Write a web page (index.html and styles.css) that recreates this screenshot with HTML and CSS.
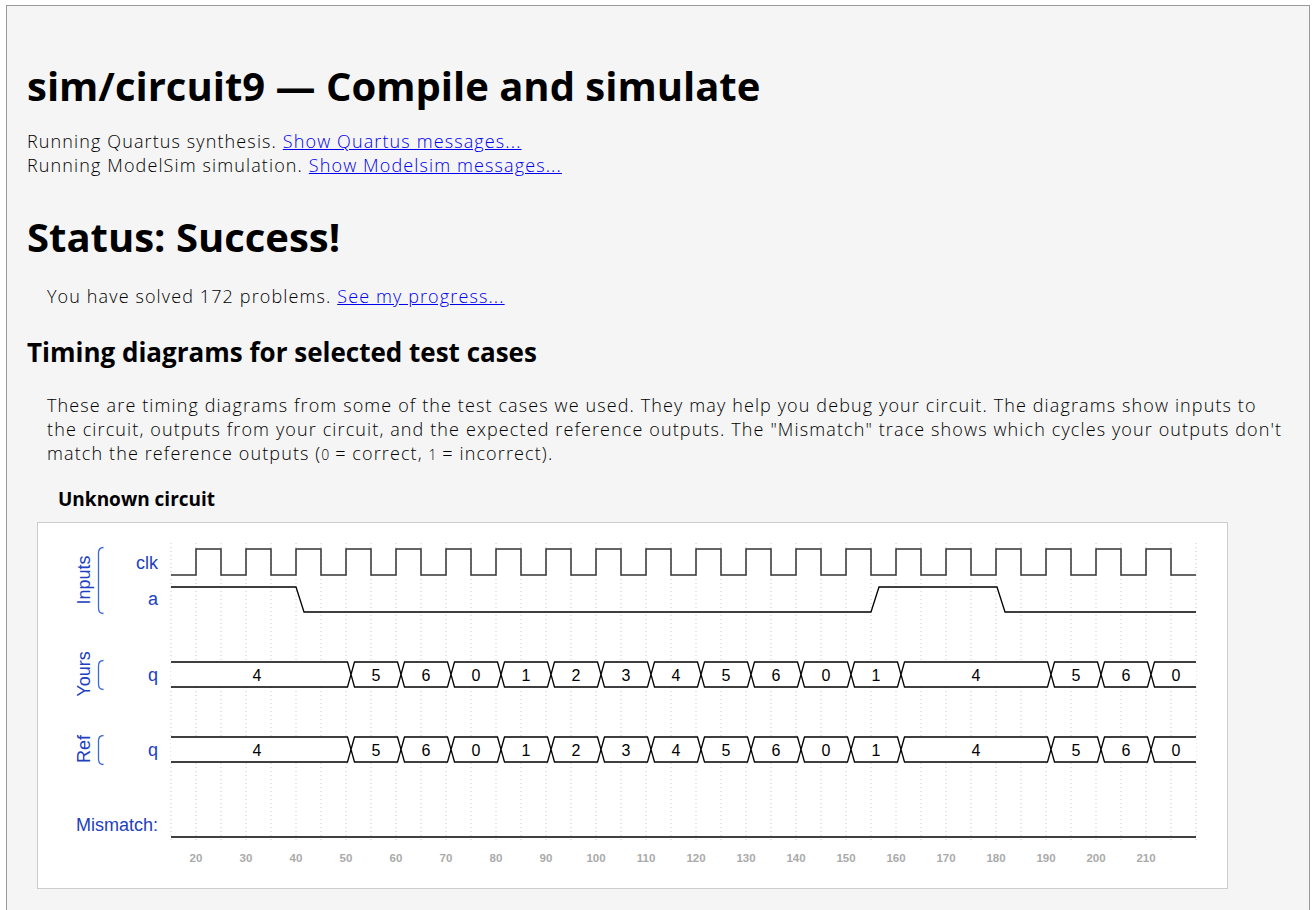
FILE: index.html
```html
<!DOCTYPE html>
<html lang="en">
<head>
<meta charset="utf-8">
<title>sim/circuit9 — Compile and simulate</title>
<link rel="stylesheet" href="styles.css">
</head>
<body>
<div class="page">
  <h1>sim/circuit9 — Compile and simulate</h1>
  <p class="log">Running Quartus synthesis. <a href="#">Show Quartus messages...</a><br>Running ModelSim simulation. <a href="#">Show Modelsim messages...</a></p>
  <h2>Status: Success!</h2>
  <p class="solved">You have solved 172 problems. <a href="#">See my progress...</a></p>
  <h3>Timing diagrams for selected test cases</h3>
  <div class="tests">
    <p class="desc">These are timing diagrams from some of the test cases we used. They may help you debug your circuit. The diagrams show inputs to the circuit, outputs from your circuit, and the expected reference outputs. The "Mismatch" trace shows which cycles your outputs don't match the reference outputs (<code>0</code> = correct, <code>1</code> = incorrect).</p>
    <h4>Unknown circuit</h4>
    <div class="wave">
      <svg class="wave-svg" width="1189" height="365" viewBox="38 523 1189 365" xmlns="http://www.w3.org/2000/svg">
        <path class="grid" d="M171 543V840M196 543V840M221 543V840M246 543V840M271 543V840M296 543V840M321 543V840M346 543V840M371 543V840M396 543V840M421 543V840M446 543V840M471 543V840M496 543V840M521 543V840M546 543V840M571 543V840M596 543V840M621 543V840M646 543V840M671 543V840M696 543V840M721 543V840M746 543V840M771 543V840M796 543V840M821 543V840M846 543V840M871 543V840M896 543V840M921 543V840M946 543V840M971 543V840M996 543V840M1021 543V840M1046 543V840M1071 543V840M1096 543V840M1121 543V840M1146 543V840M1171 543V840M1196 543V840"/>

        <g class="lbl">
          <text class="rot" transform="translate(90 580) rotate(-90)">Inputs</text>
          <text class="rot" transform="translate(90 674) rotate(-90)">Yours</text>
          <text class="rot" transform="translate(90 749) rotate(-90)">Ref</text>
          <text class="sig" x="158" y="569">clk</text>
          <text class="sig" x="158" y="605">a</text>
          <text class="sig" x="158" y="681">q</text>
          <text class="sig" x="158" y="756">q</text>
          <text class="sig" x="158" y="831">Mismatch:</text>
        </g>
        <path class="brace" d="M103.5 547.5Q98.5 547.5 98.5 553V608Q98.5 613.5 103.5 613.5"/>
        <path class="brace" d="M103.5 660.5Q98.5 660.5 98.5 666V684Q98.5 689.5 103.5 689.5"/>
        <path class="brace" d="M103.5 735.5Q98.5 735.5 98.5 741V759Q98.5 764.5 103.5 764.5"/>

        <path class="clk" d="M171 575H196V549H221V575H246V549H271V575H296V549H321V575H346V549H371V575H396V549H421V575H446V549H471V575H496V549H521V575H546V549H571V575H596V549H621V575H646V549H671V575H696V549H721V575H746V549H771V575H796V549H821V575H846V549H871V575H896V549H921V575H946V549H971V575H996V549H1021V575H1046V549H1071V575H1096V549H1121V575H1146V549H1171V575H1196"/>
        <path class="sigline" d="M171 587H296L304 612H871L879 587H997L1005 612H1196"/>

        <g class="bus">
          <path d="M171 662H347.5L351 674.5L347.5 687H171"/>
          <path d="M351 674.5L354.5 662H397.5L401 674.5L397.5 687H354.5Z"/>
          <path d="M401 674.5L404.5 662H447.5L451 674.5L447.5 687H404.5Z"/>
          <path d="M451 674.5L454.5 662H497.5L501 674.5L497.5 687H454.5Z"/>
          <path d="M501 674.5L504.5 662H547.5L551 674.5L547.5 687H504.5Z"/>
          <path d="M551 674.5L554.5 662H597.5L601 674.5L597.5 687H554.5Z"/>
          <path d="M601 674.5L604.5 662H647.5L651 674.5L647.5 687H604.5Z"/>
          <path d="M651 674.5L654.5 662H697.5L701 674.5L697.5 687H654.5Z"/>
          <path d="M701 674.5L704.5 662H747.5L751 674.5L747.5 687H704.5Z"/>
          <path d="M751 674.5L754.5 662H797.5L801 674.5L797.5 687H754.5Z"/>
          <path d="M801 674.5L804.5 662H847.5L851 674.5L847.5 687H804.5Z"/>
          <path d="M851 674.5L854.5 662H897.5L901 674.5L897.5 687H854.5Z"/>
          <path d="M901 674.5L904.5 662H1047.5L1051 674.5L1047.5 687H904.5Z"/>
          <path d="M1051 674.5L1054.5 662H1097.5L1101 674.5L1097.5 687H1054.5Z"/>
          <path d="M1101 674.5L1104.5 662H1147.5L1151 674.5L1147.5 687H1104.5Z"/>
          <path d="M1196 662H1154.5L1151 674.5L1154.5 687H1196"/>
        </g>
        <g class="val">
          <text x="257" y="681">4</text><text x="376" y="681">5</text><text x="426" y="681">6</text><text x="476" y="681">0</text><text x="526" y="681">1</text><text x="576" y="681">2</text><text x="626" y="681">3</text><text x="676" y="681">4</text><text x="726" y="681">5</text><text x="776" y="681">6</text><text x="826" y="681">0</text><text x="876" y="681">1</text><text x="976" y="681">4</text><text x="1076" y="681">5</text><text x="1126" y="681">6</text><text x="1176" y="681">0</text>
        </g>

        <g class="bus">
          <path d="M171 737H347.5L351 749.5L347.5 762H171"/>
          <path d="M351 749.5L354.5 737H397.5L401 749.5L397.5 762H354.5Z"/>
          <path d="M401 749.5L404.5 737H447.5L451 749.5L447.5 762H404.5Z"/>
          <path d="M451 749.5L454.5 737H497.5L501 749.5L497.5 762H454.5Z"/>
          <path d="M501 749.5L504.5 737H547.5L551 749.5L547.5 762H504.5Z"/>
          <path d="M551 749.5L554.5 737H597.5L601 749.5L597.5 762H554.5Z"/>
          <path d="M601 749.5L604.5 737H647.5L651 749.5L647.5 762H604.5Z"/>
          <path d="M651 749.5L654.5 737H697.5L701 749.5L697.5 762H654.5Z"/>
          <path d="M701 749.5L704.5 737H747.5L751 749.5L747.5 762H704.5Z"/>
          <path d="M751 749.5L754.5 737H797.5L801 749.5L797.5 762H754.5Z"/>
          <path d="M801 749.5L804.5 737H847.5L851 749.5L847.5 762H804.5Z"/>
          <path d="M851 749.5L854.5 737H897.5L901 749.5L897.5 762H854.5Z"/>
          <path d="M901 749.5L904.5 737H1047.5L1051 749.5L1047.5 762H904.5Z"/>
          <path d="M1051 749.5L1054.5 737H1097.5L1101 749.5L1097.5 762H1054.5Z"/>
          <path d="M1101 749.5L1104.5 737H1147.5L1151 749.5L1147.5 762H1104.5Z"/>
          <path d="M1196 737H1154.5L1151 749.5L1154.5 762H1196"/>
        </g>
        <g class="val">
          <text x="257" y="756">4</text><text x="376" y="756">5</text><text x="426" y="756">6</text><text x="476" y="756">0</text><text x="526" y="756">1</text><text x="576" y="756">2</text><text x="626" y="756">3</text><text x="676" y="756">4</text><text x="726" y="756">5</text><text x="776" y="756">6</text><text x="826" y="756">0</text><text x="876" y="756">1</text><text x="976" y="756">4</text><text x="1076" y="756">5</text><text x="1126" y="756">6</text><text x="1176" y="756">0</text>
        </g>

        <path class="sigline" d="M171 837H1196"/>

        <g class="time">
          <text x="196" y="862">20</text><text x="246" y="862">30</text><text x="296" y="862">40</text><text x="346" y="862">50</text><text x="396" y="862">60</text><text x="446" y="862">70</text><text x="496" y="862">80</text><text x="546" y="862">90</text><text x="596" y="862">100</text><text x="646" y="862">110</text><text x="696" y="862">120</text><text x="746" y="862">130</text><text x="796" y="862">140</text><text x="846" y="862">150</text><text x="896" y="862">160</text><text x="946" y="862">170</text><text x="996" y="862">180</text><text x="1046" y="862">190</text><text x="1096" y="862">200</text><text x="1146" y="862">210</text>
        </g>
      </svg>
    </div>
  </div>
</div>
</body>
</html>
```
FILE: styles.css
```css
html, body {
  margin: 0;
  background: #ffffff;
}

.page {
  margin: 5px 6px 0;
  border: 1px solid #999999;
  border-bottom: none;
  background: #f5f5f5;
  padding: 56px 20px 40px;
  font-family: "Open Sans", "Liberation Sans", sans-serif;
  font-weight: 300;
  font-size: 18px;
  line-height: 24px;
  letter-spacing: 1.12px;
  color: #000000;
}

.page a {
  color: #0000ee;
  text-decoration: underline;
}

h1, h2, h3, h4 {
  font-family: "Open Sans", "Liberation Sans", sans-serif;
  font-weight: 700;
  letter-spacing: 0;
  color: #000000;
}

h1 {
  font-size: 40px;
  line-height: 48px;
  margin: 0 0 19px;
}

.log {
  margin: 0 0 36px;
}

h2 {
  font-size: 40px;
  line-height: 48px;
  margin: 0 0 23px;
}

.solved {
  margin: 0 0 29px 20px;
}

h3 {
  font-size: 26px;
  line-height: 31px;
  margin: 0 0 25px;
}

.tests {
  margin-left: 10px;
}

.desc {
  margin: 0 0 23px 10px;
}

.desc code {
  font-family: "Open Sans", sans-serif;
  font-size: 14px;
  line-height: 18px;
  letter-spacing: 0;
}

h4 {
  font-size: 19px;
  line-height: 23px;
  margin: 0 0 11px 21px;
}

.wave {
  width: 1189px;
  height: 365px;
  border: 1px solid #cccccc;
  background: #ffffff;
}

.wave-svg {
  display: block;
}

.grid {
  fill: none;
  stroke: #c8c8c8;
  stroke-width: 1;
  stroke-dasharray: 1 3;
}

.lbl text {
  font-family: "Liberation Sans", Arial, sans-serif;
  font-size: 18px;
  letter-spacing: 0;
  fill: #2040c0;
}

.lbl .rot {
  text-anchor: middle;
}

.lbl .sig {
  text-anchor: end;
}

.brace {
  fill: none;
  stroke: #3a6ad6;
  stroke-width: 1.3;
}

.clk {
  fill: none;
  stroke: #333333;
  stroke-width: 1.5;
}

.sigline {
  fill: none;
  stroke: #000000;
  stroke-width: 1.3;
}

.bus path {
  fill: #ffffff;
  stroke: #000000;
  stroke-width: 1.3;
}

.val text {
  font-family: "Liberation Sans", Arial, sans-serif;
  font-size: 16px;
  letter-spacing: 0;
  text-anchor: middle;
  fill: #000000;
}

.time text {
  font-family: "Liberation Sans", Arial, sans-serif;
  font-size: 11.5px;
  font-weight: 700;
  letter-spacing: 0;
  text-anchor: middle;
  fill: #aaaaaa;
}
```
